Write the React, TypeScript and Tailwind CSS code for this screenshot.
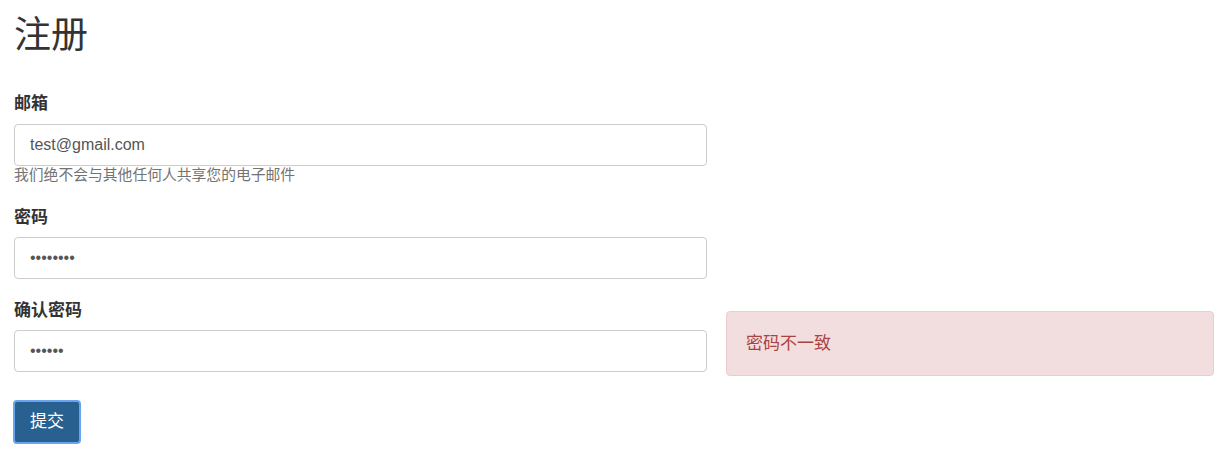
import React from "react";

const font = { fontFamily: '"Liberation Sans", "Noto Sans CJK SC", sans-serif' };

export default function App() {
  return (
    <div className="bg-white w-[1232px] h-[455px] pl-[14px] pt-[16px] text-[#333]" style={font}>
      <h1 className="text-[37px] leading-[40px] font-normal m-0 text-[#333]">注册</h1>
      <form className="mt-[38px] flex flex-col" onSubmit={(e) => e.preventDefault()}>
        <div className="w-[693px]">
          <label className="block text-[17px] leading-[20px] font-bold mb-[10px]">邮箱</label>
          <input
            type="email"
            defaultValue="test@gmail.com"
            className="block w-full h-[42px] border border-[#ccc] rounded-[4px] px-[15px] text-[16px] text-[#555] outline-none"
          />
          <div className="text-[14.8px] leading-[18px] text-[#737373]">我们绝不会与其他任何人共享您的电子邮件</div>
        </div>
        <div className="w-[693px] mt-[24px]">
          <label className="block text-[17px] leading-[20px] font-bold mb-[9px]">密码</label>
          <input
            type="password"
            defaultValue="12345678"
            className="block w-full h-[42px] border border-[#ccc] rounded-[4px] px-[15px] text-[16px] text-[#555] outline-none"
          />
        </div>
        <div className="flex items-start mt-[22px]">
          <div className="w-[693px]">
            <label className="block text-[17px] leading-[20px] font-bold mb-[9px]">确认密码</label>
            <input
              type="password"
              defaultValue="123456"
              className="block w-full h-[42px] border border-[#ccc] rounded-[4px] px-[15px] text-[16px] text-[#555] outline-none"
            />
          </div>
          <div className="ml-[19px] w-[488px] mt-[10px] h-[65px] flex items-center px-[19px] bg-[#f2dede] border border-[#ebccd1] rounded-[4px] text-[#a94442] text-[17px]">
            密码不一致
          </div>
        </div>
        <div className="mt-[24px] flex">
          <button
            type="submit"
            className="h-[44px] w-[68px] -ml-px bg-[#286090] text-white text-[17px] rounded-[4px] border-2 border-[#6aa3ee]"
          >
            提交
          </button>
        </div>
      </form>
    </div>
  );
}
